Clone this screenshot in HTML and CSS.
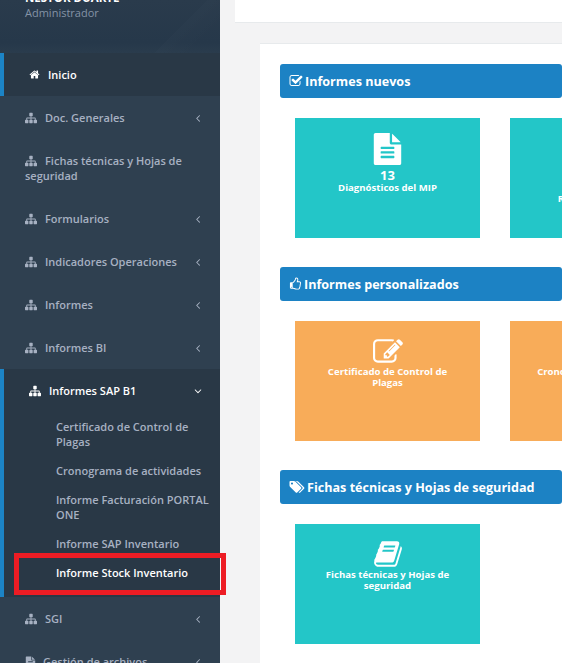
FILE: index.html
```html
<!DOCTYPE html>
<html lang="es">
<head>
  <meta charset="UTF-8" />
  <meta name="viewport" content="width=device-width, initial-scale=1.0"/>
  <title>Informes</title>
  <link rel="stylesheet" href="styles.css">
</head>
<body>
  <svg class="sprite" xmlns="http://www.w3.org/2000/svg">
    <symbol id="i-home" viewBox="0 0 1792 1792"><path d="M1472 992v480q0 26-19 45t-45 19h-384v-384h-256v384h-384q-26 0-45-19t-19-45v-480q0-1 .5-3t.5-3l575-474 575 474q1 2 1 6zm223-69l-62 74q-8 9-21 11h-3q-13 0-21-7l-692-577-692 577q-12 8-24 7-13-2-21-11l-62-74q-8-10-7-23.5t11-21.5l719-599q32-26 76-26t76 26l244 204v-195q0-14 9-23t23-9h192q14 0 23 9t9 23v408l219 182q10 8 11 21.5t-7 23.5z"/></symbol>
    <symbol id="i-sitemap" viewBox="0 0 1792 1792"><path d="M1792 1248v320q0 40-28 68t-68 28h-320q-40 0-68-28t-28-68v-320q0-40 28-68t68-28h96v-192h-512v192h96q40 0 68 28t28 68v320q0 40-28 68t-68 28h-320q-40 0-68-28t-28-68v-320q0-40 28-68t68-28h96v-192h-512v192h96q40 0 68 28t28 68v320q0 40-28 68t-68 28h-320q-40 0-68-28t-28-68v-320q0-40 28-68t68-28h96v-192q0-52 38-90t90-38h512v-192h-96q-40 0-68-28t-28-68v-320q0-40 28-68t68-28h320q40 0 68 28t28 68v320q0 40-28 68t-68 28h-96v192h512q52 0 90 38t38 90v192h96q40 0 68 28t28 68z"/></symbol>
    <symbol id="i-left" viewBox="0 0 1792 1792"><path d="M1203 544q0 13-10 23l-393 393 393 393q10 10 10 23t-10 23l-50 50q-10 10-23 10t-23-10l-466-466q-10-10-10-23t10-23l466-466q10-10 23-10t23 10l50 50q10 10 10 23z"/></symbol>
    <symbol id="i-down" viewBox="0 0 1792 1792"><path d="M1395 736q0 13-10 23l-466 466q-10 10-23 10t-23-10l-466-466q-10-10-10-23t10-23l50-50q10-10 23-10t23 10l393 393 393-393q10-10 23-10t23 10l50 50q10 10 10 23z"/></symbol>
    <symbol id="i-check" viewBox="0 0 1792 1792"><path d="M1472 930v318q0 119-84.5 203.5t-203.5 84.5h-832q-119 0-203.5-84.5t-84.5-203.5v-832q0-119 84.5-203.5t203.5-84.5h832q63 0 117 25 15 7 18 23 3 17-9 29l-49 49q-10 10-23 10-3 0-9-2-23-6-45-6h-832q-66 0-113 47t-47 113v832q0 66 47 113t113 47h832q66 0 113-47t47-113v-254q0-13 9-22l64-64q10-10 23-10 6 0 12 3 20 8 20 29zm231-489l-814 814q-24 24-57 24t-57-24l-430-430q-24-24-24-57t24-57l110-110q24-24 57-24t57 24l263 263 647-647q24-24 57-24t57 24l110 110q24 24 24 57t-24 57z"/></symbol>
    <symbol id="i-thumb" viewBox="0 0 1792 1792"><path d="M384 1344q0-26-19-45t-45-19-45 19-19 45 19 45 45 19 45-19 19-45zm1152-576q0-51-39-89.5t-89-38.5h-352q0-58 48-159.5t48-160.5q0-98-32-145t-128-47q-26 26-38 85t-30.5 125.5-59.5 109.5q-22 23-77 91-4 5-23 30t-31.5 41-34.5 42.5-40 44-38.5 35.5-40 27-35.5 9h-32v640h32q13 0 31.5 3t33 6.5 38 11 35 11.5 35.5 12.5 29 10.5q211 73 342 73h121q192 0 192-167 0-26-5-56 30-16 47.5-52.5t17.5-73.5-18-69q53-50 53-119 0-25-10-55.5t-25-47.5q32-1 53.5-47t21.5-81zm128-1q0 89-49 163 9 33 9 69 0 77-38 144 3 21 3 43 0 101-60 178 1 139-85 219.5t-227 80.5h-129q-96 0-189.5-22.5t-216.5-65.5q-116-40-138-40h-288q-53 0-90.5-37.5t-37.5-90.5v-640q0-53 37.5-90.5t90.5-37.5h274q36-24 137-155 58-75 107-128 24-25 35.5-85.5t30.5-126.5 62-108q39-37 90-37 84 0 151 32.5t102 101.5 35 186q0 93-48 192h176q104 0 180 76t76 179z"/></symbol>
    <symbol id="i-tags" viewBox="0 0 1920 1792"><path d="M448 448q0-53-37.5-90.5t-90.5-37.5-90.5 37.5-37.5 90.5 37.5 90.5 90.5 37.5 90.5-37.5 37.5-90.5zm1067 576q0 53-37 90l-491 492q-39 37-91 37-53 0-90-37l-715-716q-38-37-64.5-101t-26.5-117v-416q0-52 38-90t90-38h416q53 0 117 26.5t102 64.5l715 714q37 39 37 91zm384 0q0 53-37 90l-491 492q-39 37-91 37-36 0-59-14t-53-45l470-470q37-37 37-90 0-52-37-91l-715-714q-38-38-102-64.5t-117-26.5h224q53 0 117 26.5t102 64.5l715 714q37 39 37 91z"/></symbol>
    <symbol id="i-file" viewBox="0 0 1792 1792"><path d="M1596 476q14 14 28 36h-472v-472q22 14 36 28zm-476 164h544v1056q0 40-28 68t-68 28h-1344q-40 0-68-28t-28-68v-1600q0-40 28-68t68-28h800v544q0 40 28 68t68 28zm160 736v-64q0-14-9-23t-23-9h-704q-14 0-23 9t-9 23v64q0 14 9 23t23 9h704q14 0 23-9t9-23zm0-256v-64q0-14-9-23t-23-9h-704q-14 0-23 9t-9 23v64q0 14 9 23t23 9h704q14 0 23-9t9-23zm0-256v-64q0-14-9-23t-23-9h-704q-14 0-23 9t-9 23v64q0 14 9 23t23 9h704q14 0 23-9t9-23z"/></symbol>
    <symbol id="i-edit" viewBox="0 0 1792 1792"><path d="M888 1184l116-116-152-152-116 116v56h96v96h56zm440-720q-16-16-33 1l-350 350q-17 17-1 33t33-1l350-350q17-17 1-33zm80 594v190q0 119-84.5 203.5t-203.5 84.5h-832q-119 0-203.5-84.5t-84.5-203.5v-832q0-119 84.5-203.5t203.5-84.5h832q63 0 117 25 15 7 18 23 3 17-9 29l-49 49q-14 14-32 8-23-6-45-6h-832q-66 0-113 47t-47 113v832q0 66 47 113t113 47h832q66 0 113-47t47-113v-126q0-13 9-22l64-64q15-15 35-7t20 29zm-96-738l288 288-672 672h-288v-288zm444 132l-92 92-288-288 92-92q28-28 68-28t68 28l152 152q28 28 28 68t-28 68z"/></symbol>
    <symbol id="i-book" viewBox="0 0 1792 1792"><path d="M1703 478q40 57 18 129l-275 906q-19 64-76.5 107.5t-122.5 43.5h-923q-77 0-148.5-53.5t-99.5-131.5q-24-67-2-127 0-4 3-27t4-37q1-8-3-21.5t-3-19.5q2-11 8-21t16.5-23.5 16.5-23.5q23-38 45-91.5t30-91.5q3-10 .5-30t-.5-28q3-11 17-28t17-23q21-36 42-92t25-90q1-9-2.5-32t.5-28q4-13 22-30.5t22-22.5q19-26 42.5-84.5t27.5-96.5q1-8-3-25.5t-2-26.5q2-8 9-18t18-23 17-21q8-12 16.5-30.5t15-35 16-36 19.5-32 26.5-23.5 36-11.5 47.5 5.5l-1 3q38-9 51-9h761q74 0 114 56t18 130l-274 906q-36 119-71.5 153.5t-128.5 34.5h-869q-27 0-38 15-11 16-1 43 24 70 144 70h923q29 0 56-15.5t35-41.5l300-987q7-22 5-57 38 15 59 43zm-1064 2q-4 13 2 22.5t20 9.5h608q13 0 25.5-9.5t16.5-22.5l21-64q4-13-2-22.5t-20-9.5h-608q-13 0-25.5 9.5t-16.5 22.5zm-83 256q-4 13 2 22.5t20 9.5h608q13 0 25.5-9.5t16.5-22.5l21-64q4-13-2-22.5t-20-9.5h-608q-13 0-25.5 9.5t-16.5 22.5z"/></symbol>
  </svg>

  <div class="layout">
    <nav class="sidebar">
      <div class="profile">
        <strong class="profile-name">NESTOR DUARTE</strong>
        <span class="profile-role">Administrador</span>
      </div>
      <ul class="menu">
        <li class="menu-item active">
          <a class="menu-link"><svg class="icon home"><use href="#i-home"/></svg><span class="menu-text">Inicio</span></a>
        </li>
        <li class="menu-item">
          <a class="menu-link"><svg class="icon"><use href="#i-sitemap"/></svg><span class="menu-text">Doc. Generales</span><svg class="arrow"><use href="#i-left"/></svg></a>
        </li>
        <li class="menu-item">
          <a class="menu-link wrap"><svg class="icon"><use href="#i-sitemap"/></svg>Fichas técnicas y Hojas de seguridad</a>
        </li>
        <li class="menu-item">
          <a class="menu-link"><svg class="icon"><use href="#i-sitemap"/></svg><span class="menu-text">Formularios</span><svg class="arrow"><use href="#i-left"/></svg></a>
        </li>
        <li class="menu-item">
          <a class="menu-link"><svg class="icon"><use href="#i-sitemap"/></svg><span class="menu-text">Indicadores Operaciones</span><svg class="arrow"><use href="#i-left"/></svg></a>
        </li>
        <li class="menu-item">
          <a class="menu-link"><svg class="icon"><use href="#i-sitemap"/></svg><span class="menu-text">Informes</span><svg class="arrow"><use href="#i-left"/></svg></a>
        </li>
        <li class="menu-item">
          <a class="menu-link"><svg class="icon"><use href="#i-sitemap"/></svg><span class="menu-text">Informes BI</span><svg class="arrow"><use href="#i-left"/></svg></a>
        </li>
        <li class="menu-item active">
          <a class="menu-link"><svg class="icon"><use href="#i-sitemap"/></svg><span class="menu-text">Informes SAP B1</span><svg class="arrow"><use href="#i-down"/></svg></a>
          <ul class="submenu">
            <li>Certificado de Control de Plagas</li>
            <li>Cronograma de actividades</li>
            <li>Informe Facturación PORTAL ONE</li>
            <li>Informe SAP Inventario</li>
            <li class="current">Informe Stock Inventario</li>
          </ul>
          <div class="highlight"></div>
        </li>
        <li class="menu-item">
          <a class="menu-link"><svg class="icon"><use href="#i-sitemap"/></svg><span class="menu-text">SGI</span><svg class="arrow"><use href="#i-left"/></svg></a>
        </li>
        <li class="menu-item">
          <a class="menu-link"><svg class="icon file"><use href="#i-file"/></svg><span class="menu-text">Gestión de archivos</span><svg class="arrow"><use href="#i-left"/></svg></a>
        </li>
      </ul>
    </nav>

    <main class="content">
      <div class="topbar"></div>
      <div class="panel">
        <h2 class="section-title"><svg class="title-icon"><use href="#i-check"/></svg>Informes nuevos</h2>
        <div class="cards">
          <div class="card teal">
            <svg class="card-icon"><use href="#i-file"/></svg>
            <b class="card-count">13</b>
            <p class="card-label">Diagnósticos del MIP</p>
          </div>
          <div class="card teal">
            <svg class="card-icon"><use href="#i-file"/></svg>
            <b class="card-count">8</b>
            <p class="card-label">Informes de Retroalimentación</p>
          </div>
        </div>

        <h2 class="section-title"><svg class="title-icon thumb"><use href="#i-thumb"/></svg>Informes personalizados</h2>
        <div class="cards">
          <div class="card orange">
            <svg class="card-icon edit"><use href="#i-edit"/></svg>
            <p class="card-label">Certificado de Control de Plagas</p>
          </div>
          <div class="card orange">
            <svg class="card-icon edit"><use href="#i-edit"/></svg>
            <p class="card-label">Cronograma de actividades</p>
          </div>
        </div>

        <h2 class="section-title"><svg class="title-icon tags"><use href="#i-tags"/></svg>Fichas técnicas y Hojas de seguridad</h2>
        <div class="cards">
          <div class="card teal">
            <svg class="card-icon book"><use href="#i-book"/></svg>
            <p class="card-label">Fichas técnicas y Hojas de seguridad</p>
          </div>
        </div>
      </div>
    </main>
  </div>
</body>
</html>
```

FILE: styles.css
```css
* { box-sizing: border-box; }
html, body { height: 100%; margin: 0; overflow: hidden; }
body { font-family: "Open Sans", sans-serif; font-size: 11px; background: #f3f3f4; }
svg { fill: currentColor; flex: none; }
.sprite { display: none; }
.layout { display: flex; height: 663px; overflow: hidden; }

/* sidebar */
.sidebar { flex: 0 0 220px; width: 220px; background: #2f4050; color: #a7b1c2; }
.profile {
  height: 53px; padding: 0 0 33px 25px; overflow: hidden;
  display: flex; flex-direction: column; justify-content: flex-end;
  background:
    linear-gradient(135deg, transparent 76%, rgba(255,255,255,.012) 76%, transparent 90%),
    linear-gradient(180deg, #2a3b4c 0%, #26384a 80%, #2a3c4d 100%);
}
.profile-name { color: #fff; font-size: 11.5px; font-weight: 700; line-height: 15px; }
.profile-role { font-size: 11px; line-height: 15px; color: #8493a6; }

.menu, .submenu { list-style: none; margin: 0; padding: 0; }
.menu-item { position: relative; }
.menu-link { display: flex; align-items: center; height: 43px; padding: 0 0 0 25px; font-size: 11px; font-weight: 600; }
.menu-link.wrap { display: block; height: 58px; padding: 14px 20px 0 25px; line-height: 15px; }
.menu-link.wrap .icon { margin-right: 8px; vertical-align: -2px; }
.menu-text { flex: 1; }
.icon { width: 12px; height: 12px; margin-right: 8px; }
.icon.file { width: 11px; margin-right: 7px; }
.arrow { width: 12px; height: 12px; margin-right: 16px; }

.menu-item.active { background: #293846; border-left: 4px solid #1c84c6; }
.menu-item.active .menu-link { color: #fff; padding-left: 25px; }
.icon.home { width: 11px; height: 11px; margin-right: 8px; }
.submenu { padding: 0 0 10px 52px; font-size: 11px; font-weight: 600; line-height: 15px; }
.submenu li { padding: 7px 8px 7px 0; }
.submenu .current { color: #fff; }
.highlight { position: absolute; left: 10px; right: -6px; top: 184px; height: 42px; border: 5px solid #ed1c24; }

/* content */
.content { flex: 1; min-width: 0; padding-left: 15px; }
.topbar { height: 23px; background: #fff; border-bottom: 1px solid #e7eaec; }
.panel { margin: 20px 0 0 25px; padding: 20px 0 0 20px; background: #fff; height: 640px; border-top: 1px solid #e7eaec; }
.section-title {
  display: flex; align-items: center; height: 34px; margin: 0 0 20px;
  padding-left: 9px; border-radius: 3px; background: #1c82c4;
  color: #fff; font-size: 12.6px; font-weight: 700;
}
.title-icon { width: 14px; height: 14px; margin-right: 2px; }
.title-icon.thumb { width: 13px; }
.title-icon.tags { width: 16px; }

.cards { display: flex; gap: 30px; margin: 0 0 29px 15px; height: 120px; }
.card { flex: 0 0 185px; height: 120px; padding: 15px 25px 0; color: #fff; text-align: center; }
.teal { background: #23c6c8; }
.orange { background: #f8ac59; }
.card-icon { display: block; width: 33px; height: 32px; margin: 0 auto; }
.card-icon.edit { width: 34px; height: 30px; margin-top: 1px; margin-bottom: -1px; }
.card-icon.book { width: 32px; height: 30px; }
.card-count { display: block; font-size: 13px; line-height: 14px; margin-top: 3px; }
.card-label { margin: 0; font-size: 9.6px; font-weight: 700; line-height: 11px; }
```
